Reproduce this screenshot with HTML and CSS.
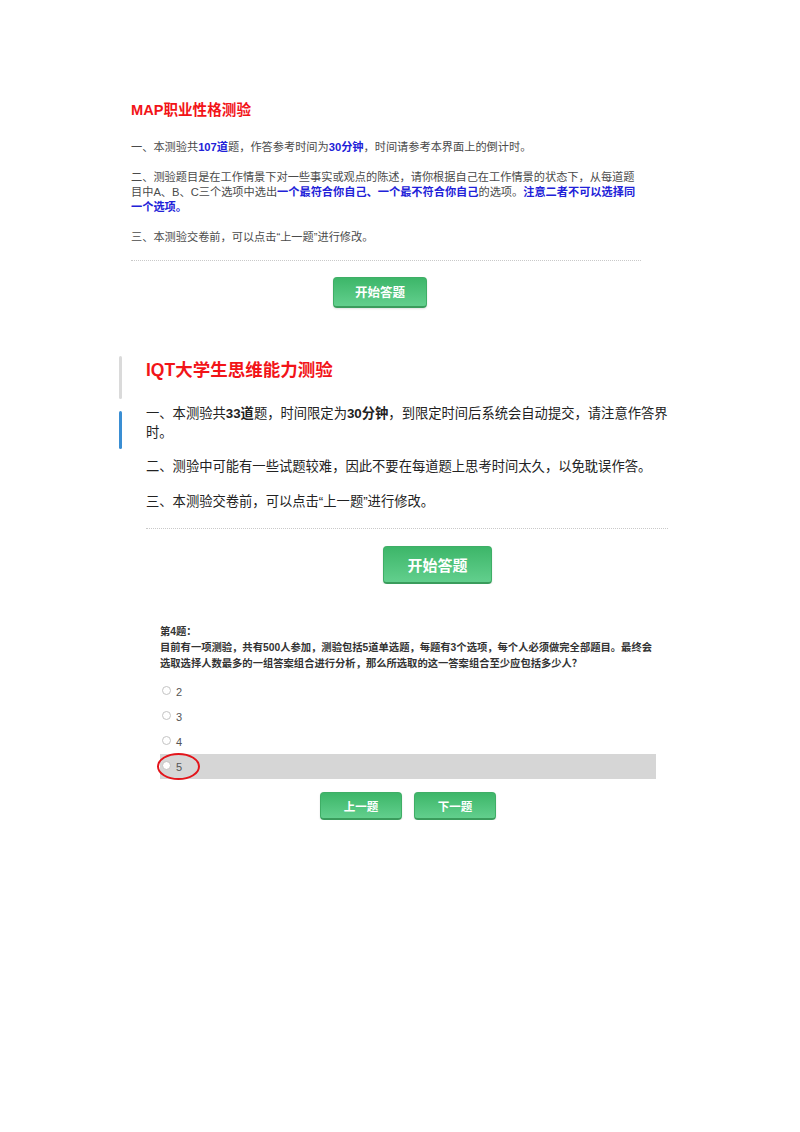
FILE: index.html
```html
<!DOCTYPE html>
<html lang="zh-CN">
<head>
<meta charset="utf-8">
<title>测验</title>
<link rel="stylesheet" href="styles.css">
</head>
<body>
<div class="page">
  <section class="map">
    <h2 class="map-title">MAP职业性格测验</h2>
    <p class="map-p first">一、本测验共<b class="hl">107道</b>题，作答参考时间为<b class="hl">30分钟</b>，时间请参考本界面上的倒计时。</p>
    <p class="map-p">二、测验题目是在工作情景下对一些事实或观点的陈述，请你根据自己在工作情景的状态下，从每道题目中A、B、C三个选项中选出<b class="hl">一个最符合你自己、一个最不符合你自己</b>的选项。<b class="hl">注意二者不可以选择同一个选项。</b></p>
    <p class="map-p">三、本测验交卷前，可以点击“上一题”进行修改。</p>
    <div class="dots"></div>
    <button class="btn btn-start-sm">开始答题</button>
  </section>

  <section class="iqt">
    <div class="iqt-bars">
      <span class="bar bar-gray"></span>
      <span class="bar bar-blue"></span>
    </div>
    <div class="iqt-main">
      <h2 class="iqt-title">IQT大学生思维能力测验</h2>
      <p class="iqt-p first">一、本测验共<b>33道</b>题，时间限定为<b>30分钟</b>，到限定时间后系统会自动提交，请注意作答界面上的倒计时。</p>
      <p class="iqt-p second">二、测验中可能有一些试题较难，因此不要在每道题上思考时间太久，以免耽误作答。</p>
      <p class="iqt-p third">三、本测验交卷前，可以点击“上一题”进行修改。</p>
      <div class="dots"></div>
      <button class="btn btn-start-lg">开始答题</button>
    </div>
  </section>

  <section class="quiz">
    <p class="q-num">第4题：</p>
    <p class="q-text">目前有一项测验，共有500人参加，测验包括5道单选题，每题有3个选项，每个人必须做完全部题目。最终会选取选择人数最多的一组答案组合进行分析，那么所选取的这一答案组合至少应包括多少人？</p>
    <div class="options">
      <label class="opt"><span class="radio"></span><span class="opt-text">2</span></label>
      <label class="opt"><span class="radio"></span><span class="opt-text">3</span></label>
      <label class="opt"><span class="radio"></span><span class="opt-text">4</span></label>
      <label class="opt sel"><span class="radio"></span><span class="opt-text">5</span><span class="ring"></span></label>
    </div>
    <div class="nav">
      <button class="btn btn-nav">上一题</button>
      <button class="btn btn-nav">下一题</button>
    </div>
  </section>
</div>
</body>
</html>
```

FILE: styles.css
```css
html, body {
  margin: 0;
  padding: 0;
  background: #ffffff;
}

body {
  font-family: "Liberation Sans", "Noto Sans CJK SC", sans-serif;
}

.page {
  padding-top: 100px;
}

/* ---------- section 1 ---------- */
.map {
  margin-left: 131px;
  width: 510px;
}

.map-title {
  margin: 0;
  font-size: 14.6px;
  line-height: 20px;
  font-weight: bold;
  color: #f21418;
}

.map-p {
  margin: 15px 0 0;
  font-size: 11.2px;
  line-height: 15px;
  color: #4a4a4a;
}

.map-p.first {
  margin-top: 19.5px;
}

.map-p:last-of-type {
  margin-top: 15px;
}

.hl {
  color: #2121d8;
}

.dots {
  border-top: 1px dotted #c9c9c9;
  height: 0;
}

.map .dots {
  margin-top: 15px;
}

/* ---------- buttons ---------- */
.btn {
  display: block;
  padding: 0;
  border: 1px solid #3fae66;
  border-bottom: 2px solid #3a9c5c;
  border-radius: 4px;
  background: linear-gradient(#3db669, #62cf8d);
  color: #ffffff;
  font-family: "Noto Sans CJK SC", sans-serif;
  font-weight: bold;
  box-shadow: 0 1px 2px rgba(0, 0, 0, 0.12);
  cursor: pointer;
}

.btn-start-sm {
  margin: 16px 0 0 202px;
  width: 94px;
  height: 31px;
  font-size: 12.5px;
}

/* ---------- section 2 ---------- */
.iqt {
  display: flex;
  margin: 50px 0 0 119px;
}

.iqt-bars {
  display: flex;
  flex-direction: column;
  width: 4px;
  margin-right: 23px;
}

.bar {
  display: block;
  width: 3px;
  border-radius: 2px;
}

.bar-gray {
  height: 43px;
  margin-top: -2px;
  background: #dadada;
}

.bar-blue {
  height: 38px;
  margin-top: 12px;
  background: #3a8ed3;
}

.iqt-main {
  width: 522px;
  overflow: hidden;
}

.iqt-title {
  margin: 0;
  font-size: 17.5px;
  line-height: 24px;
  font-weight: bold;
  color: #f21418;
}

.iqt-p {
  width: 596px;
  margin: 0;
  font-size: 13.3px;
  line-height: 19px;
  color: #222222;
}

.iqt-p.first {
  margin-top: 22px;
}

.iqt-p.second {
  margin-top: 15px;
}

.iqt-p.third {
  margin-top: 16px;
}

.iqt .dots {
  margin-top: 17px;
}

.btn-start-lg {
  margin: 17px 0 0 237px;
  width: 109px;
  height: 38px;
  font-size: 15px;
}

/* ---------- section 3 ---------- */
.quiz {
  margin: 40px 0 0 160px;
  width: 496px;
}

.q-num,
.q-text {
  margin: 0;
  font-size: 10.3px;
  line-height: 16px;
  font-weight: bold;
  color: #333333;
}

.options {
  margin-top: 7.5px;
}

.opt {
  position: relative;
  display: flex;
  align-items: center;
  height: 25px;
  font-size: 11px;
  color: #555555;
}

.opt.sel {
  background: #d6d6d6;
}

.radio {
  box-sizing: border-box;
  width: 9px;
  height: 9px;
  margin: 0 5px 3px 2px;
  border: 1px solid #c4c4c4;
  border-radius: 50%;
  background: #ffffff;
}

.ring {
  position: absolute;
  left: -3px;
  top: -1px;
  box-sizing: border-box;
  width: 43px;
  height: 27px;
  border: 2px solid #e3151b;
  border-radius: 50%;
}

.nav {
  display: flex;
  justify-content: center;
  gap: 12px;
  margin-top: 13px;
}

.btn-nav {
  width: 82px;
  height: 28px;
  font-size: 11.5px;
}
```
